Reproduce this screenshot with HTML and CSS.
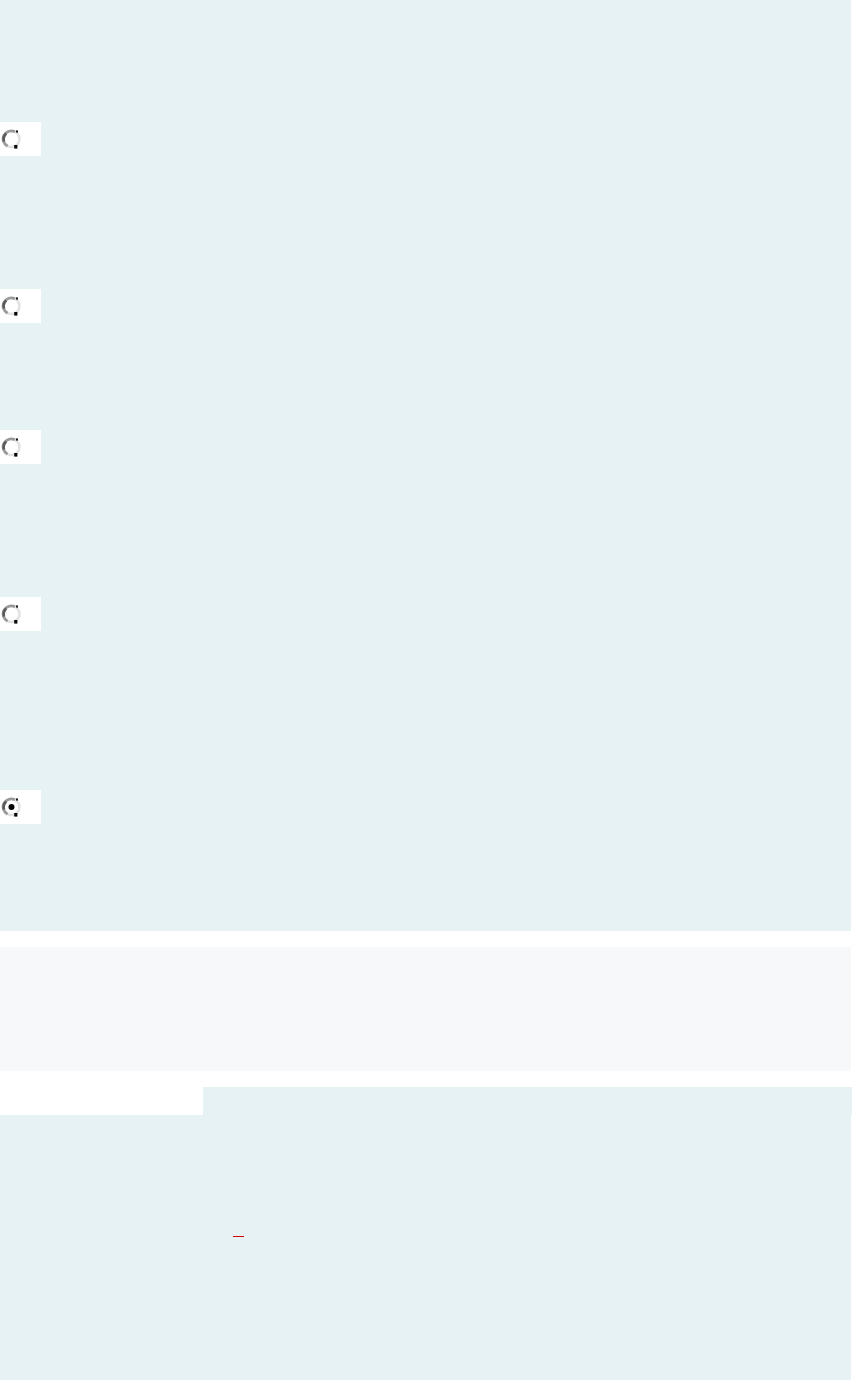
FILE: index.html
```
<!doctype html>
<html>
  <head>
    <meta charset="utf-8">
    <title>Options</title>
    <link rel="stylesheet" href="styles.css">
  </head>
  <body>
    <div id="page">
      <section class="choices">
        <div class="choice">
          <span class="radio">
            <svg width="21" height="22" viewBox="0 0 21 22">
              <circle cx="10.5" cy="11" r="8" fill="#fff" stroke="#e2e2e2" stroke-width="2.6"/>
              <path d="M6.5 18.2 A8 8 0 0 1 14 3.8" fill="none" stroke="#9a9a9a" stroke-width="2.8"/>
              <path d="M3 13.5 A8 8 0 0 1 5.2 5.5" fill="none" stroke="#5a5a5a" stroke-width="2.6"/>
              <rect x="15" y="2.4" width="2" height="2.2" fill="#1a1a1a"/>
              <rect x="13.2" y="17" width="3.2" height="3.6" fill="#0a0a0a"/>
            </svg>
          </span>
        </div>
        <div class="choice">
          <span class="radio">
            <svg width="21" height="22" viewBox="0 0 21 22">
              <circle cx="10.5" cy="11" r="8" fill="#fff" stroke="#e2e2e2" stroke-width="2.6"/>
              <path d="M6.5 18.2 A8 8 0 0 1 14 3.8" fill="none" stroke="#9a9a9a" stroke-width="2.8"/>
              <path d="M3 13.5 A8 8 0 0 1 5.2 5.5" fill="none" stroke="#5a5a5a" stroke-width="2.6"/>
              <rect x="15" y="2.4" width="2" height="2.2" fill="#1a1a1a"/>
              <rect x="13.2" y="17" width="3.2" height="3.6" fill="#0a0a0a"/>
            </svg>
          </span>
        </div>
        <div class="choice choice-short">
          <span class="radio">
            <svg width="21" height="22" viewBox="0 0 21 22">
              <circle cx="10.5" cy="11" r="8" fill="#fff" stroke="#e2e2e2" stroke-width="2.6"/>
              <path d="M6.5 18.2 A8 8 0 0 1 14 3.8" fill="none" stroke="#9a9a9a" stroke-width="2.8"/>
              <path d="M3 13.5 A8 8 0 0 1 5.2 5.5" fill="none" stroke="#5a5a5a" stroke-width="2.6"/>
              <rect x="15" y="2.4" width="2" height="2.2" fill="#1a1a1a"/>
              <rect x="13.2" y="17" width="3.2" height="3.6" fill="#0a0a0a"/>
            </svg>
          </span>
        </div>
        <div class="choice">
          <span class="radio">
            <svg width="21" height="22" viewBox="0 0 21 22">
              <circle cx="10.5" cy="11" r="8" fill="#fff" stroke="#e2e2e2" stroke-width="2.6"/>
              <path d="M6.5 18.2 A8 8 0 0 1 14 3.8" fill="none" stroke="#9a9a9a" stroke-width="2.8"/>
              <path d="M3 13.5 A8 8 0 0 1 5.2 5.5" fill="none" stroke="#5a5a5a" stroke-width="2.6"/>
              <rect x="15" y="2.4" width="2" height="2.2" fill="#1a1a1a"/>
              <rect x="13.2" y="17" width="3.2" height="3.6" fill="#0a0a0a"/>
            </svg>
          </span>
        </div>
        <div class="choice choice-long">
          <span class="radio">
            <svg width="21" height="22" viewBox="0 0 21 22">
              <circle cx="10.5" cy="11" r="8" fill="#fff" stroke="#e2e2e2" stroke-width="2.6"/>
              <path d="M6.5 18.2 A8 8 0 0 1 14 3.8" fill="none" stroke="#9a9a9a" stroke-width="2.8"/>
              <path d="M3 13.5 A8 8 0 0 1 5.2 5.5" fill="none" stroke="#5a5a5a" stroke-width="2.6"/>
              <rect x="15" y="2.4" width="2" height="2.2" fill="#1a1a1a"/>
              <rect x="13.2" y="17" width="3.2" height="3.6" fill="#0a0a0a"/>
              <circle cx="10.5" cy="11" r="3" fill="#000"/>
            </svg>
          </span>
        </div>
      </section>
      <section class="notice"></section>
      <section class="panel">
        <div class="tabs">
          <div class="tab tab-active"></div>
          <div class="tab-rest"></div>
        </div>
        <div class="panel-body">
          <span class="mark"></span>
        </div>
      </section>
    </div>
  </body>
</html>
```
FILE: styles.css
```
*,*:before,*:after {
  margin: 0;
  padding: 0;
  border: 0;
  box-sizing: border-box;
}

body {
  background-color: #fff;
  font-family: "Liberation Sans", Arial, sans-serif;
  font-size: 13px;
  color: #222;
}

#page {
  width: 852px;
  height: 1380px;
  overflow: hidden;
}

.choices {
  width: 851px;
  height: 931px;
  padding-top: 122px;
  background-color: #e7f2f4;
}

.choice + .choice {
  margin-top: 133px;
}

.choice.choice-short {
  margin-top: 107px;
}

.choice.choice-long {
  margin-top: 159px;
}

.radio {
  display: flex;
  align-items: center;
  width: 41px;
  height: 34px;
  padding-left: 1px;
  background-color: #fff;
}

.radio svg {
  display: block;
}

.notice {
  width: 851px;
  height: 124px;
  margin-top: 16px;
  background-color: #f7f8fa;
}

.panel {
  margin-top: 16px;
}

.tabs {
  display: flex;
  height: 28px;
}

.tab {
  width: 203px;
  background-color: #fff;
}

.tab-rest {
  flex: 1;
  background-color: #e7f2f4;
}

.panel-body {
  width: 851px;
  height: 265px;
  padding: 121px 0 0 233px;
  background-color: #e7f2f4;
}

.mark {
  display: block;
  width: 11px;
  height: 1px;
  background-color: #d40000;
}
```
